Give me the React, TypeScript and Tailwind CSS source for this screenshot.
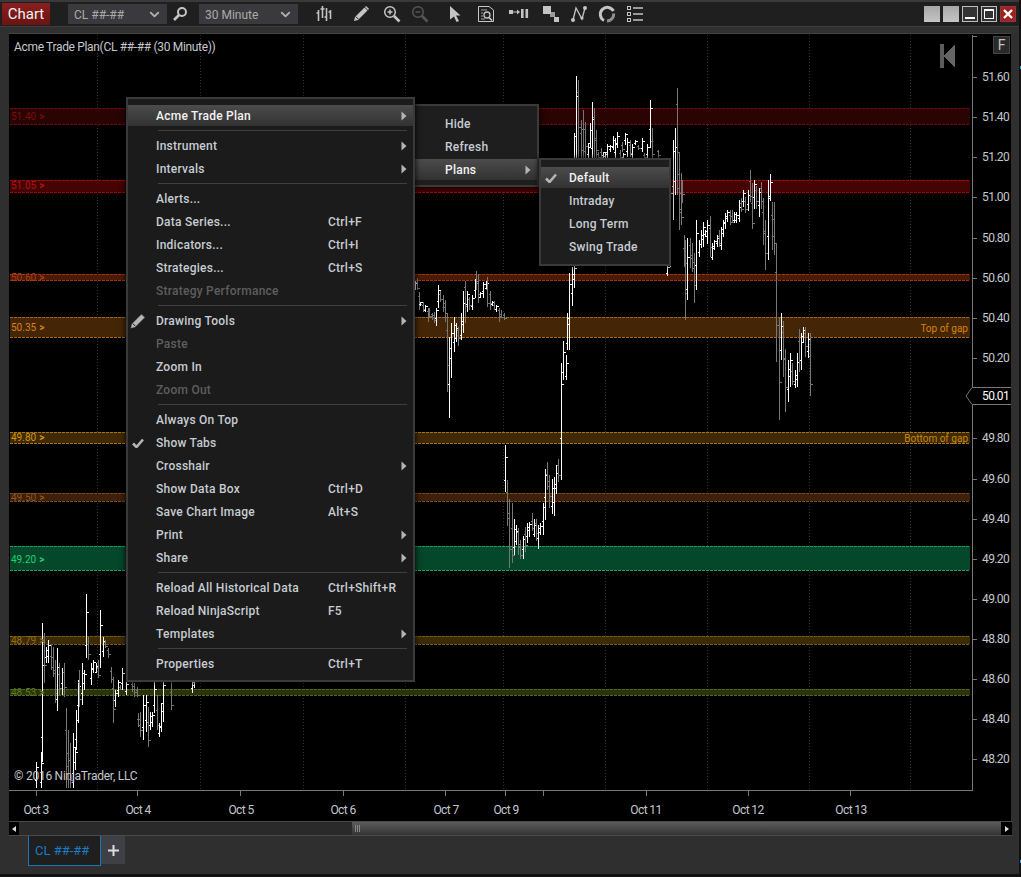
import { ChevronDown } from "lucide-react"

type Bar = [number, number, number, number]

// bars read off the chart: x, top, bottom, 1 = up (white) 0 = down (grey)
const groups: { ox: number; oy: number; bars: Bar[] }[] = [
  {
    ox: 0,
    oy: 580,
    bars: [
      [107, 545, 625, 1], [122, 515, 625, 1], [127, 130, 545, 1], [133, 160, 310, 0], [139, 200, 250, 1], [145, 180, 250, 1],
      [152, 195, 270, 0], [158, 200, 290, 0], [165, 240, 370, 0], [172, 205, 392, 1], [178, 250, 345, 0], [185, 265, 345, 1],
      [192, 250, 350, 0], [197, 385, 625, 0], [204, 450, 625, 0], [211, 490, 625, 0], [218, 460, 625, 1], [224, 505, 570, 1],
      [228, 390, 510, 1], [233, 300, 430, 1], [238, 270, 380, 0], [245, 250, 375, 1], [252, 270, 330, 1], [258, 42, 235, 1],
      [265, 170, 240, 0], [272, 250, 315, 1], [279, 240, 280, 1], [287, 250, 280, 1], [294, 240, 295, 0], [301, 90, 265, 1],
      [308, 170, 230, 1], [316, 180, 205, 0], [325, 205, 235, 0], [332, 260, 310, 0], [339, 290, 430, 0], [346, 330, 380, 1],
      [353, 300, 350, 1], [360, 315, 330, 0], [367, 265, 330, 1], [378, 300, 345, 1], [395, 300, 335, 0], [403, 310, 350, 0],
      [411, 320, 350, 0], [414, 400, 440, 0], [420, 395, 470, 0], [430, 345, 480, 1], [437, 345, 455, 1], [444, 380, 500, 0],
      [450, 395, 450, 1], [457, 395, 440, 1], [461, 300, 400, 1], [472, 345, 450, 0], [478, 430, 470, 1], [484, 370, 455, 1],
      [490, 300, 425, 1], [514, 300, 390, 0], [576, 300, 338, 1], [583, 300, 325, 1],
    ],
  },
  {
    ox: 410,
    oy: 265,
    bars: [
      [14, 48, 75, 1], [20, 38, 75, 0], [26, 80, 135, 0], [30, 110, 122, 1], [38, 110, 140, 0], [45, 120, 140, 1], [53, 130, 170, 0],
      [58, 130, 160, 0], [65, 145, 165, 0], [72, 140, 175, 0], [79, 128, 182, 1], [85, 60, 128, 1], [91, 78, 110, 0], [99, 90, 142, 0],
      [105, 105, 170, 0], [111, 145, 380, 0], [118, 215, 458, 1], [124, 175, 338, 1], [133, 155, 260, 1], [139, 175, 230, 1],
      [145, 185, 242, 0], [152, 145, 225, 1], [160, 78, 205, 1], [166, 48, 175, 0], [172, 78, 140, 1], [178, 95, 135, 0],
      [185, 90, 135, 1], [194, 42, 100, 1], [199, 18, 75, 0], [205, 28, 115, 0], [211, 80, 100, 1], [220, 50, 100, 1], [227, 48, 75, 1],
      [232, 35, 125, 0], [239, 78, 135, 0], [245, 108, 122, 1], [253, 108, 135, 0], [259, 120, 140, 1], [266, 128, 170, 0],
      [272, 135, 160, 0], [281, 145, 165, 0], [454, 295, 645, 1], [460, 228, 345, 1], [467, 270, 345, 1], [472, 145, 255, 1],
      [478, 25, 255, 1], [487, 5, 122, 1], [493, 0, 70, 1],
    ],
  },
  {
    ox: 410,
    oy: 420,
    bars: [
      [286, 75, 215, 1], [292, 180, 318, 0], [298, 238, 445, 0], [307, 250, 428, 0], [313, 297, 405, 1], [319, 315, 375, 1],
      [325, 325, 405, 0], [331, 360, 417, 0], [339, 348, 417, 1], [346, 322, 395, 0], [352, 310, 368, 1], [358, 305, 350, 1],
      [367, 280, 332, 0], [373, 298, 350, 1], [379, 298, 362, 0], [385, 315, 387, 1], [391, 310, 345, 1], [400, 250, 345, 1],
      [406, 148, 300, 1], [412, 125, 210, 0], [418, 165, 263, 0], [427, 178, 283, 1], [433, 172, 288, 1], [439, 135, 222, 1],
      [445, 118, 185, 0],
    ],
  },
  {
    ox: 555,
    oy: 70,
    bars: [
      [58, 190, 600, 1], [64, 18, 265, 1], [70, 30, 265, 0], [78, 150, 265, 0], [84, 120, 265, 0], [91, 155, 265, 0], [98, 220, 265, 1],
      [104, 160, 235, 1], [112, 95, 265, 1], [118, 115, 265, 0], [122, 180, 265, 0], [130, 245, 265, 0], [139, 235, 265, 0],
      [145, 245, 265, 1], [150, 250, 265, 1], [157, 222, 265, 1], [165, 225, 245, 1], [173, 198, 240, 1], [180, 205, 265, 1],
      [186, 185, 235, 1], [194, 240, 265, 0], [200, 215, 245, 0], [205, 250, 265, 1], [209, 188, 225, 1], [217, 205, 260, 1],
      [225, 210, 260, 0], [232, 222, 265, 1], [240, 210, 225, 1], [248, 225, 240, 0], [260, 205, 245, 1], [268, 250, 265, 0],
      [276, 222, 265, 1], [286, 90, 235, 1], [292, 175, 265, 0], [310, 240, 265, 0], [346, 312, 590, 1], [353, 210, 450, 1],
      [359, 175, 375, 1], [365, 55, 375, 0], [372, 250, 480, 0], [380, 330, 400, 0],
    ],
  },
  {
    ox: 660,
    oy: 170,
    bars: [
      [20, 285, 318, 1], [58, 0, 160, 0], [64, 10, 165, 0], [72, 195, 290, 0], [76, 210, 450, 0], [82, 205, 390, 1], [91, 205, 295, 0],
      [97, 220, 305, 0], [103, 250, 400, 0], [109, 150, 360, 1], [118, 210, 260, 1], [124, 180, 235, 1], [130, 155, 230, 1],
      [136, 180, 200, 1], [142, 150, 222, 1], [151, 138, 260, 0], [157, 220, 270, 1], [163, 210, 240, 1], [170, 195, 230, 1],
      [178, 180, 230, 0], [184, 170, 240, 1], [190, 150, 200, 1], [196, 130, 178, 1], [202, 120, 155, 1], [211, 120, 165, 0],
      [217, 120, 160, 0], [223, 125, 160, 1], [229, 125, 158, 1], [237, 90, 155, 1], [243, 85, 125, 0], [249, 60, 110, 1],
      [255, 80, 128, 0], [265, 60, 122, 1], [271, 0, 95, 0], [277, 40, 178, 0], [283, 30, 118, 1], [289, 48, 118, 0], [298, 55, 140, 1],
      [304, 35, 118, 0], [310, 85, 225, 0], [316, 150, 300, 0], [325, 30, 270, 1], [331, 12, 92, 1], [337, 95, 240, 0], [343, 95, 255, 0],
    ],
  },
  {
    ox: 680,
    oy: 150,
    bars: [
      [289, 280, 635, 0], [298, 505, 810, 0], [304, 490, 630, 1], [310, 512, 680, 0], [316, 598, 785, 0], [325, 630, 755, 1],
      [331, 608, 710, 1], [337, 638, 705, 0], [344, 660, 715, 1], [351, 610, 710, 1], [358, 538, 665, 0], [364, 548, 660, 1],
      [370, 532, 575, 1], [376, 530, 620, 0], [385, 550, 625, 1], [391, 550, 737, 0],
    ],
  },
]

const bands = [
  { top: 108, bottom: 124, fill: "#2a0303", line: "#7a0808" },
  { top: 180, bottom: 192, fill: "#450303", line: "#a50808" },
  { top: 274, bottom: 280, fill: "#4a1a05", line: "#a8320a" },
  { top: 317, bottom: 337, fill: "#442607", line: "#a8660f" },
  { top: 432, bottom: 443, fill: "#402a05", line: "#a8760f" },
  { top: 493, bottom: 501, fill: "#3d200a", line: "#7d4a1a" },
  { top: 546, bottom: 570, fill: "#05472a", line: "#0fa85a" },
  { top: 636, bottom: 644, fill: "#3d2b05", line: "#7d5c10" },
  { top: 689, bottom: 695, fill: "#2a3309", line: "#55661a" },
]

const bandLabels = [
  { text: "51.40", y: 117, color: "#7a0c0c" },
  { text: "51.05", y: 186, color: "#b01515" },
  { text: "50.60", y: 278, color: "#b03c10" },
  { text: "50.35", y: 328, color: "#d88210" },
  { text: "49.80", y: 438, color: "#d09410" },
  { text: "49.50", y: 498, color: "#94551f" },
  { text: "49.20", y: 560, color: "#1fd070" },
  { text: "48.79", y: 641, color: "#8f6a10" },
  { text: "48.53", y: 693, color: "#5a7a1c" },
]

const priceLabels = [
  ["51.60", 77], ["51.40", 117], ["51.20", 157], ["51.00", 197], ["50.80", 238], ["50.60", 278], ["50.40", 318], ["50.20", 358],
  ["49.80", 438], ["49.60", 479], ["49.40", 519], ["49.20", 559], ["49.00", 599], ["48.80", 639], ["48.60", 679], ["48.40", 719], ["48.20", 759],
] as const

const dates = [
  ["Oct 3", 36], ["Oct 4", 138], ["Oct 5", 241], ["Oct 6", 343], ["Oct 7", 446], ["Oct 9", 506], ["Oct 11", 646], ["Oct 12", 748], ["Oct 13", 851],
] as const

const gridLines = [97, 200, 303, 405, 503, 605, 707, 809, 910]
const dateTicks = [36, 137, 240, 343, 445, 505, 543, 646, 748, 850]

function ChartCanvas() {
  return (
    <svg className="absolute inset-0" width="1002" height="788" viewBox="9 34 1002 788" shapeRendering="crispEdges">
      {gridLines.map((x) => (
        <line key={x} x1={x + 0.5} x2={x + 0.5} y1="35" y2="790" stroke="#303030" strokeDasharray="1 2" />
      ))}
      {bands.map((b) => (
        <g key={b.top}>
          <rect x="10" y={b.top} width="960" height={b.bottom - b.top} fill={b.fill} />
          <line x1="10" x2="970" y1={b.top + 0.5} y2={b.top + 0.5} stroke={b.line} strokeDasharray="3 1" />
          <line x1="10" x2="970" y1={b.bottom + 0.5} y2={b.bottom + 0.5} stroke={b.line} strokeDasharray="3 1" />
        </g>
      ))}
      {groups.map((g) =>
        g.bars.map(([x, t, b, up]) => {
          const px = Math.round(g.ox + x / 3) + 0.5
          const top = g.oy + t / 3
          const bottom = Math.min(g.oy + b / 3, 789)
          const h = bottom - top
          const seed = (x * 7 + t) % 10
          const open = Math.round(top + h * (up ? 0.55 + seed * 0.03 : 0.15 + seed * 0.03)) + 0.5
          const close = Math.round(top + h * (up ? 0.12 + seed * 0.02 : 0.6 + seed * 0.03)) + 0.5
          const color = up ? "#ffffff" : "#777777"
          return (
            <g key={`${g.ox}-${x}`} stroke={color}>
              <line x1={px} x2={px} y1={top} y2={bottom} />
              <line x1={px - 2} x2={px} y1={open} y2={open} />
              <line x1={px} x2={px + 2} y1={close} y2={close} />
            </g>
          )
        }),
      )}
      {/* axis */}
      <path d="M972.5 35V790.5H9M972 36.5H977" fill="none" stroke="#777" />
      {priceLabels.map(([, y]) => (
        <line key={y} x1="972" x2="977" y1={y + 0.5} y2={y + 0.5} stroke="#777" />
      ))}
      {dateTicks.map((x) => (
        <line key={x} x1={x + 0.5} x2={x + 0.5} y1="790" y2="796" stroke="#777" />
      ))}
      {/* collapse marker */}
      <rect x="940" y="44" width="4" height="24" fill="#5c5c5c" />
      <path d="M955 44V68L944 56Z" fill="#666" />
      {/* current price marker */}
      <path d="M972 387.5H1011.5V404.5H972L966 396Z" fill="#000" stroke="#777" shapeRendering="auto" />
    </svg>
  )
}

function Arrow({ color = "#b5b5b5" }: { color?: string }) {
  return (
    <svg width="6" height="10" viewBox="0 0 6 10" className="shrink-0">
      <path d="M0.5 0.5L5.5 5L0.5 9.5Z" fill={color} />
    </svg>
  )
}

function Check() {
  return (
    <svg className="-translate-x-[4px]" width="12" height="10" viewBox="0 0 12 10">
      <path d="M1 5.5L4.5 9L11 1.5" fill="none" stroke="#b5b5b5" strokeWidth="2.6" />
    </svg>
  )
}

type Item = { label: string; key?: string; sub?: boolean; off?: boolean; on?: boolean; checked?: boolean; pencil?: boolean }

const mainMenu: (Item | "sep")[] = [
  { label: "Acme Trade Plan", sub: true, on: true },
  "sep",
  { label: "Instrument", sub: true },
  { label: "Intervals", sub: true },
  "sep",
  { label: "Alerts..." },
  { label: "Data Series...", key: "Ctrl+F" },
  { label: "Indicators...", key: "Ctrl+I" },
  { label: "Strategies...", key: "Ctrl+S" },
  { label: "Strategy Performance", off: true },
  "sep",
  { label: "Drawing Tools", sub: true, pencil: true },
  { label: "Paste", off: true },
  { label: "Zoom In" },
  { label: "Zoom Out", off: true },
  "sep",
  { label: "Always On Top" },
  { label: "Show Tabs", checked: true },
  { label: "Crosshair", sub: true },
  { label: "Show Data Box", key: "Ctrl+D" },
  { label: "Save Chart Image", key: "Alt+S" },
  { label: "Print", sub: true },
  { label: "Share", sub: true },
  "sep",
  { label: "Reload All Historical Data", key: "Ctrl+Shift+R" },
  { label: "Reload NinjaScript", key: "F5" },
  { label: "Templates", sub: true },
  "sep",
  { label: "Properties", key: "Ctrl+T" },
]

function MenuRow({ item, gutter, labelWidth }: { item: Item; gutter: string; labelWidth: string }) {
  return (
    <div
      className={`flex items-center pr-[6px] ${
        item.on
          ? "my-px h-[21px] bg-gradient-to-b from-[#4c4c4c] to-[#323232] text-[#f2f2f2]"
          : item.off
            ? "h-[23px] text-[#5e5e5e]"
            : "h-[23px] text-[#c6ccd2]"
      }`}
    >
      <div className={`flex shrink-0 items-center justify-center ${gutter}`}>
        {item.checked && <Check />}
        {item.pencil && (
          <svg className="-translate-x-[4px]" width="18" height="18" viewBox="0 0 18 18">
            <path d="M1.5 16.5L2.5 12L12.5 2L16 5.5L6 15.5Z" fill="#b5b5b5" stroke="#1b1b1b" strokeWidth="0.6" />
            <path d="M3.8 11.6L6.4 14.2" stroke="#1b1b1b" />
          </svg>
        )}
      </div>
      <div className={`shrink-0 ${labelWidth}`}>{item.label}</div>
      {item.key && <div>{item.key}</div>}
      {item.sub && <div className="ml-auto"><Arrow /></div>}
    </div>
  )
}

function MenuSep() {
  return (
    <div className="flex h-[7px] items-center pl-[30px] pr-[6px]">
      <div className="h-px w-full bg-[#3f3f3f]" />
    </div>
  )
}

const menuText = "font-['Roboto',sans-serif] text-[12px] font-medium tracking-[0.25px]"

function ContextMenus() {
  return (
    <>
      <div className={`absolute left-[415px] top-[104px] h-[83px] w-[124px] border-2 border-l-0 border-[#3a3a3a] bg-[#1e1e1e] pt-[6px] shadow-[0_0_6px_#000] ${menuText}`}>
        <MenuRow item={{ label: "Hide" }} gutter="w-[30px]" labelWidth="w-[70px]" />
        <MenuRow item={{ label: "Refresh" }} gutter="w-[30px]" labelWidth="w-[70px]" />
        <MenuRow item={{ label: "Plans", sub: true, on: true }} gutter="w-[30px]" labelWidth="w-[70px]" />
      </div>
      <div className={`absolute left-[539px] top-[158px] h-[108px] w-[132px] border-2 border-[#3a3a3a] bg-[#1e1e1e] pt-[6px] shadow-[0_0_6px_#000] ${menuText}`}>
        <MenuRow item={{ label: "Default", on: true, checked: true }} gutter="w-[28px]" labelWidth="w-[90px]" />
        <MenuRow item={{ label: "Intraday" }} gutter="w-[28px]" labelWidth="w-[90px]" />
        <MenuRow item={{ label: "Long Term" }} gutter="w-[28px]" labelWidth="w-[90px]" />
        <MenuRow item={{ label: "Swing Trade" }} gutter="w-[28px]" labelWidth="w-[90px]" />
      </div>
      <div className={`absolute left-[126px] top-[97px] h-[585px] w-[289px] border-2 border-[#3a3a3a] bg-[#1b1b1b] pt-[5px] shadow-[0_0_6px_#000] ${menuText}`}>
        {mainMenu.map((m, i) =>
          m === "sep" ? <MenuSep key={i} /> : <MenuRow key={m.label} item={m} gutter="w-[28px]" labelWidth="w-[172px]" />,
        )}
      </div>
    </>
  )
}

function Combo({ label }: { label: string }) {
  return (
    <div className="flex h-[20px] w-[99px] items-center justify-between bg-[#3a3a3e] pl-[6px] pr-[5px] text-[12px] text-[#aaaaaa]">
      <span className="pt-px">{label}</span>
      <ChevronDown size={15} strokeWidth={3} color="#b0b0b0" />
    </div>
  )
}

function Toolbar() {
  const ic = "#c4c4c4"
  return (
    <div className="flex h-[24px] items-center">
      <div className="ml-[68px]"><Combo label="CL ##-##" /></div>
      <svg className="ml-[5px]" width="16" height="16" viewBox="0 0 16 16" fill="none" stroke={ic} strokeWidth="2">
        <circle cx="10" cy="6" r="4" />
        <path d="M7 9L2 14" strokeWidth="2.6" />
      </svg>
      <div className="ml-[11px]"><Combo label="30 Minute" /></div>
      <svg className="ml-[18px]" width="16" height="16" viewBox="0 0 16 16" fill="none" stroke={ic} strokeWidth="1.6">
        <path d="M2.5 4V15M0.5 7H2.5M6.5 0V12M4.5 3H8.5M10.5 2V15M8.5 11H10.5M14.5 4V13M12.5 6H14.5" />
      </svg>
      <svg className="ml-[20px]" width="18" height="18" viewBox="0 0 18 18">
        <path d="M2 16L3 12L12.5 2.5L15.5 5.5L6 15Z" fill={ic} />
        <path d="M13.5 1.5L16.5 4.5" stroke={ic} strokeWidth="1.6" />
        <path d="M3.8 11.6L6.4 14.2" stroke="#1f1f1f" />
      </svg>
      <svg className="ml-[13px]" width="18" height="18" viewBox="0 0 18 18" fill="none" stroke={ic} strokeWidth="1.5">
        <circle cx="7" cy="7" r="5.3" />
        <path d="M4.5 7H9.5M7 4.5V9.5" />
        <path d="M11 11L16.5 16.5" strokeWidth="2.6" />
      </svg>
      <svg className="ml-[10px]" width="18" height="18" viewBox="0 0 18 18" fill="none" stroke="#555" strokeWidth="1.5">
        <circle cx="7" cy="7" r="5.3" />
        <path d="M4.5 7H9.5" />
        <path d="M11 11L16.5 16.5" strokeWidth="2.6" />
      </svg>
      <svg className="ml-[19px]" width="14" height="18" viewBox="0 0 14 18">
        <path d="M2 1L12.5 10.5H8L11 16L8.5 17L6 11.5L2 14.5Z" fill={ic} />
      </svg>
      <svg className="ml-[15px]" width="18" height="18" viewBox="0 0 18 18" fill="none" stroke={ic}>
        <path d="M1.5 1.5H12L16.5 5V16.5H1.5Z" />
        <path d="M4 5H10M4 8H6M4 11H6M4 14H8" strokeWidth="0.8" />
        <circle cx="10" cy="10" r="3" strokeWidth="1.3" />
        <path d="M12 12.5L15 15.5" strokeWidth="1.7" />
      </svg>
      <svg className="ml-[14px]" width="20" height="12" viewBox="0 0 20 12" fill={ic}>
        <rect x="0" y="2" width="4" height="4" />
        <path d="M4 3.5H8V1.5L11 4L8 6.5V4.5H4Z" />
        <rect x="12" y="1" width="2.6" height="9" />
        <rect x="16.5" y="1" width="2.6" height="9" />
      </svg>
      <svg className="ml-[13px]" width="18" height="18" viewBox="0 0 18 18" fill={ic}>
        <rect x="1" y="1" width="8" height="8" />
        <rect x="8" y="7" width="5" height="5" opacity="0.75" />
        <rect x="12" y="12" width="5" height="5" />
      </svg>
      <svg className="ml-[10px]" width="18" height="18" viewBox="0 0 18 18" fill={ic}>
        <path d="M3 15L6 3L12 14L15 3" fill="none" stroke={ic} strokeWidth="1.3" />
        <circle cx="3" cy="15" r="2" />
        <circle cx="12" cy="13" r="1.6" />
        <circle cx="15" cy="3" r="2" />
      </svg>
      <svg className="ml-[10px]" width="18" height="18" viewBox="0 0 18 18" fill="none" stroke={ic} strokeWidth="3">
        <path d="M6 15.5A7 7 0 1 1 15.5 6" />
        <path d="M15.7 8.5A7 7 0 0 1 9 16" stroke="#8f8f8f" />
      </svg>
      <svg className="ml-[10px]" width="18" height="18" viewBox="0 0 18 18" fill="none" stroke={ic}>
        <rect x="1.5" y="1.5" width="3" height="3" />
        <rect x="1.5" y="7.5" width="3" height="3" />
        <rect x="1.5" y="13.5" width="3" height="3" />
        <path d="M7 3H17M7 9H17M7 15H17" strokeWidth="1.6" />
      </svg>
    </div>
  )
}

function WindowButtons() {
  const base = "flex h-[16px] w-[16px] items-center justify-center"
  return (
    <div className="ml-auto flex items-center gap-[3px] pr-[5px]">
      <div className={`${base} bg-gradient-to-b from-[#a8a8a8] to-[#c4c4c4]`} />
      <div className={`${base} bg-gradient-to-b from-[#a8a8a8] to-[#c4c4c4]`} />
      <div className={`${base} items-end border border-[#bdbdbd] bg-[#333] pb-[2px]`}>
        <div className="h-[2px] w-[10px] bg-white" />
      </div>
      <div className={`${base} border border-[#bdbdbd] bg-[#333]`}>
        <div className="h-[10px] w-[10px] border border-t-2 border-white" />
      </div>
      <div className={`${base} border border-[#8a3a3a] bg-[#a32020]`}>
        <svg width="10" height="10" viewBox="0 0 10 10">
          <path d="M1 1L9 9M9 1L1 9" stroke="#fff" strokeWidth="2.4" />
        </svg>
      </div>
    </div>
  )
}

export default function App() {
  const axisFont = "font-['Roboto',sans-serif] text-[12px] tracking-[-0.6px] text-[#c4c8cc]"
  return (
    <div className="relative flex h-[877px] w-[1021px] flex-col overflow-hidden bg-[#2f2f2f] pb-[3px] font-['Roboto',sans-serif]">
      {/* title bar */}
      <div className="flex h-[27px] shrink-0 items-center border-b border-[#3d3d3d] border-t-2 border-t-[#3a3a3a] bg-[#1f1f1f] pl-[2px]">
        <div className="flex h-[22px] w-[48px] shrink-0 items-center justify-center bg-gradient-to-b from-[#8c1e1e] to-[#6a1414] text-[15px] text-[#f0f0f0]">
          Chart
        </div>
        <div className="-ml-[50px]"><Toolbar /></div>
        <WindowButtons />
      </div>

      <div className="h-[6px] shrink-0 bg-[#303030]" />

      {/* chart panel */}
      <div className="relative ml-[9px] h-[788px] w-[1002px] shrink-0 overflow-hidden border-t border-[#444] bg-black">
        <ChartCanvas />
        <div className="absolute left-[5px] top-[4px] text-[12px] tracking-[-0.33px] text-[#c4c8cc]">Acme Trade Plan(CL ##-## (30 Minute))</div>
        <div className="absolute left-[984px] top-[2px] flex h-[18px] w-[17px] items-center justify-center border border-[#444] bg-[#2a2a2a] text-[14px] text-[#c4c4c4]">F</div>

        {bandLabels.map((l) => (
          <div key={l.text} className="absolute left-[2px] flex items-center gap-[3px] text-[10px] leading-[12px]" style={{ top: l.y - 40, color: l.color }}>
            {l.text}
            <span className="font-bold">{">"}</span>
          </div>
        ))}
        <div className="absolute right-[43px] top-[289px] text-[10px] leading-[12px] text-[#d8820f]">Top of gap</div>
        <div className="absolute right-[43px] top-[399px] text-[10px] leading-[12px] text-[#c8860f]">Bottom of gap</div>

        {priceLabels.map(([t, y]) => (
          <div key={t} className={`absolute left-[973px] leading-[14px] ${axisFont}`} style={{ top: y - 41 }}>
            {t}
          </div>
        ))}
        <div className={`absolute left-[973px] top-[355px] leading-[14px] !text-white ${axisFont}`}>50.01</div>

        {dates.map(([t, x]) => (
          <div key={t} className={`absolute top-[769px] w-[60px] -translate-x-1/2 text-center leading-[14px] ${axisFont}`} style={{ left: x - 9 }}>
            {t}
          </div>
        ))}
        <div className="absolute left-[5px] top-[735px] text-[12px] leading-[14px] tracking-[-0.25px] text-[#c4c8cc]">© 2016 NinjaTrader, LLC</div>
      </div>

      {/* scrollbar */}
      <div className="ml-[9px] flex h-[15px] w-[1003px] shrink-0 items-stretch border-b border-t border-[#4a4a4a] bg-[#2a2a2a]">
        <div className="flex w-[10px] items-center justify-center bg-black">
          <svg width="4" height="6" viewBox="0 0 4 6"><path d="M4 0V6L0 3Z" fill="#ddd" /></svg>
        </div>
        <div className="ml-[333px] flex w-[649px] items-center gap-px bg-gradient-to-b from-[#5c5c5c] to-[#333] pl-[3px]">
          <div className="h-[7px] w-px bg-[#888]" />
          <div className="h-[7px] w-px bg-[#888]" />
          <div className="h-[7px] w-px bg-[#888]" />
        </div>
        <div className="ml-auto flex w-[11px] items-center justify-center bg-black">
          <svg width="4" height="6" viewBox="0 0 4 6"><path d="M0 0V6L4 3Z" fill="#ddd" /></svg>
        </div>
      </div>

      {/* tabs */}
      <div className="flex flex-1 items-start pl-[28px]">
        <div className="flex h-[30px] w-[73px] items-center border border-t-0 border-[#1a75bb] bg-[#1f1f1f] pl-[6px] pt-px text-[13px] text-[#1a7dc4]">CL ##-##</div>
        <div className="flex h-[28px] w-[24px] items-center justify-center bg-[#3f3f46]">
          <svg width="11" height="11" viewBox="0 0 11 11"><path d="M5.5 0V11M0 5.5H11" stroke="#ddd" strokeWidth="2" /></svg>
        </div>
      </div>

      <div className="absolute bottom-0 left-0 h-[3px] w-full bg-[#111]" />
      <div className="absolute bottom-0 right-0 top-0 w-[2px] bg-[#111]" />
      <div className="absolute right-0 top-[66px] h-[3px] w-px bg-[#2aa6e8]" />
      <div className="absolute right-0 top-[860px] h-[3px] w-px bg-[#2aa6e8]" />
      <ContextMenus />
    </div>
  )
}
